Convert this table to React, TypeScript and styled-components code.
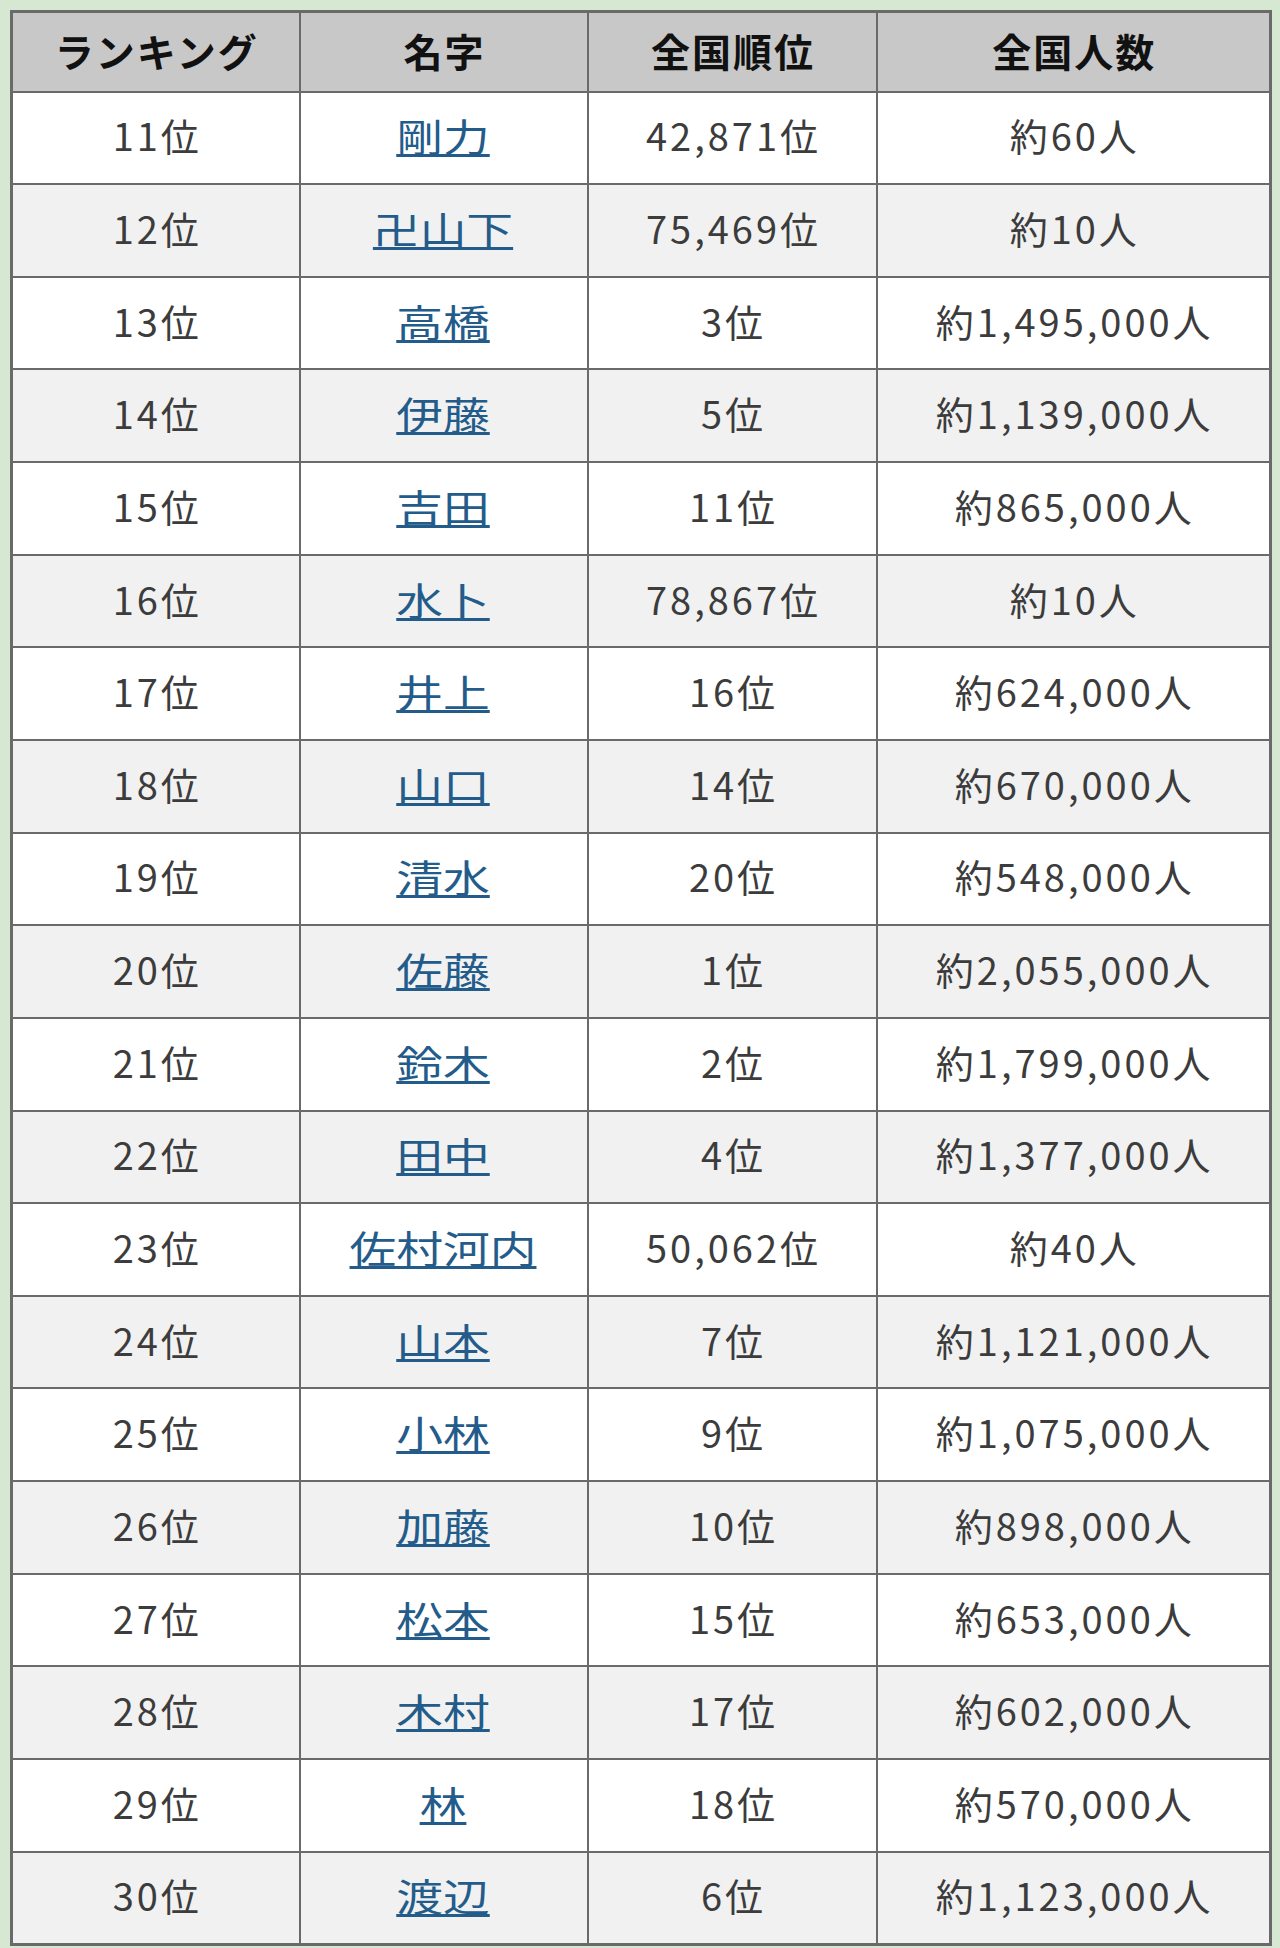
import React from "react";
import styled, { createGlobalStyle } from "styled-components";

const Global = createGlobalStyle`
  html, body { margin: 0; padding: 0; background: #d6e8d1; }
  body { font-family: "Noto Sans CJK JP", "Noto Sans", sans-serif; }
`;

const Page = styled.div`
  width: 1280px;
  height: 1948px;
  box-sizing: border-box;
  padding: 10px 8px 0 10px;
  background: #d6e8d1;
`;

const Table = styled.table`
  width: 1262px;
  table-layout: fixed;
  border-collapse: collapse;
  border: 3px solid #6a6a6a;
  font-family: "Noto Sans CJK JP", "Noto Sans", sans-serif;
`;

const HeadRow = styled.tr`
  height: 80px;
  background: #c8c8c8;
`;

const Th = styled.th`
  border: 2px solid #6a6a6a;
  font-size: 39px;
  font-weight: 700;
  color: #111;
  text-align: center;
  vertical-align: middle;
  padding: 0 0 4px 2px;
  letter-spacing: 2px;
`;

const Row = styled.tr<{ $alt: boolean }>`
  height: 92.65px;
  background: ${(p) => (p.$alt ? "#f1f1f1" : "#ffffff")};
`;

const Td = styled.td`
  border: 2px solid #6a6a6a;
  font-size: 38px;
  font-weight: 400;
  color: #3c3c3c;
  text-align: center;
  vertical-align: middle;
  padding: 0 0 6px 3px;
  letter-spacing: 3px;
  white-space: nowrap;
`;

const NameCell = styled(Td)`
  letter-spacing: 0;
  padding-left: 0;
`;

const NameLink = styled.a`
  display: inline-block;
  color: #235c8a;
  text-decoration: underline;
  text-decoration-thickness: 3px;
  text-underline-offset: 3px;
  transform: scaleX(1.23);
  cursor: pointer;
`;

const rows: [number, string, string, string][] = [
  [11, "剛力", "42,871位", "約60人"],
  [12, "卍山下", "75,469位", "約10人"],
  [13, "高橋", "3位", "約1,495,000人"],
  [14, "伊藤", "5位", "約1,139,000人"],
  [15, "吉田", "11位", "約865,000人"],
  [16, "水卜", "78,867位", "約10人"],
  [17, "井上", "16位", "約624,000人"],
  [18, "山口", "14位", "約670,000人"],
  [19, "清水", "20位", "約548,000人"],
  [20, "佐藤", "1位", "約2,055,000人"],
  [21, "鈴木", "2位", "約1,799,000人"],
  [22, "田中", "4位", "約1,377,000人"],
  [23, "佐村河内", "50,062位", "約40人"],
  [24, "山本", "7位", "約1,121,000人"],
  [25, "小林", "9位", "約1,075,000人"],
  [26, "加藤", "10位", "約898,000人"],
  [27, "松本", "15位", "約653,000人"],
  [28, "木村", "17位", "約602,000人"],
  [29, "林", "18位", "約570,000人"],
  [30, "渡辺", "6位", "約1,123,000人"],
];

export default function App() {
  return (
    <Page>
      <Global />
      <Table>
        <colgroup>
          <col style={{ width: 288 }} />
          <col style={{ width: 288 }} />
          <col style={{ width: 289 }} />
          <col />
        </colgroup>
        <thead>
          <HeadRow>
            <Th>ランキング</Th>
            <Th>名字</Th>
            <Th>全国順位</Th>
            <Th>全国人数</Th>
          </HeadRow>
        </thead>
        <tbody>
          {rows.map(([rank, name, national, count], i) => (
            <Row key={rank} $alt={i % 2 === 1}>
              <Td>{rank}位</Td>
              <NameCell>
                <NameLink href="#">{name}</NameLink>
              </NameCell>
              <Td>{national}</Td>
              <Td>{count}</Td>
            </Row>
          ))}
        </tbody>
      </Table>
    </Page>
  );
}
